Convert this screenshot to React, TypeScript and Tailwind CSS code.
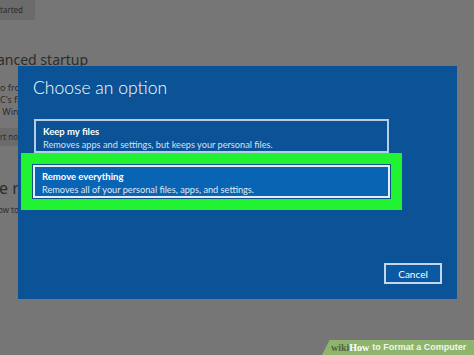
export default function App() {
  return (
    <div className="relative w-[474px] h-[355px] overflow-hidden bg-[#767676] font-['Noto_Sans',sans-serif]">
      {/* Settings page behind the dialog */}
      <div className="flex flex-col text-[#2c2c2c]">
        <div className="w-[35px] h-[20px] bg-[#6b6b6b] flex items-center text-[8px] leading-none">tarted</div>
        <div className="mt-[30px] -ml-[3px] text-[14px] leading-[20px] whitespace-nowrap">anced startup</div>
        <div className="mt-[12px] flex flex-col text-[9px] leading-[12px] whitespace-nowrap">
          <span>o from</span>
          <span>C's files</span>
          <span>&nbsp;Win</span>
        </div>
        <div className="mt-[10px] w-[30px] h-[18px] bg-[#6b6b6b] flex items-center text-[8px] leading-none whitespace-nowrap">rt now</div>
        <div className="mt-[32px] -ml-[1px] text-[16px] leading-[20px] whitespace-nowrap">e re</div>
        <div className="mt-[7px] -ml-[2px] text-[8px] leading-[10px] whitespace-nowrap">ow to</div>
      </div>

      {/* Choose an option dialog */}
      <div className="absolute left-[18px] top-[66px] w-[439px] h-[233px] bg-[#0b5396] flex flex-col pl-[16px] pr-[15px] pt-[10px] pb-[15px] text-white font-['Lato',sans-serif]">
        <h1 className="ml-[-1px] text-[17.5px] leading-[24px] font-light">Choose an option</h1>
        <div className="mt-[19px] w-[355px] h-[34px] border-2 border-[#b7cde6] px-[7px] pt-[4px]">
          <p className="text-[9.5px] leading-[13px] font-bold">Keep my files</p>
          <p className="text-[9.2px] leading-[13px] text-[#d3e1f1]">Removes apps and settings, but keeps your personal files.</p>
        </div>
        <div className="-ml-[13px] w-[381px] h-[57px] bg-[#21f232] p-[12px]">
          <div className="h-[33px] bg-[#0a64b4] border-2 border-[#e4edf8] ring-1 ring-[#0b4f8f] px-[7px] pt-[3px]">
            <p className="text-[9.5px] leading-[13px] font-bold">Remove everything</p>
            <p className="text-[9.2px] leading-[13px] text-[#dde8f5]">Removes all of your personal files, apps, and settings.</p>
          </div>
        </div>
        <button className="mt-auto self-end w-[58px] h-[21px] bg-[#0b59a3] border-2 border-[#c3d6eb] text-[10px] leading-none text-white">
          Cancel
        </button>
      </div>

      {/* wikiHow watermark */}
      <div className="absolute right-0 bottom-0 w-[152px] h-[15px] bg-[#8fb46d] [clip-path:polygon(5%_0,100%_0,100%_100%,0_100%)] flex items-center pl-[9px] text-[9px] leading-none font-bold font-['Liberation_Sans',sans-serif] whitespace-nowrap">
        <span className="text-[#52653f] font-['Liberation_Serif',serif] text-[10px]">wiki</span>
        <span className="text-white text-[10px] font-['Liberation_Serif',serif]">How</span>
        <span className="text-[#f2f6ec] ml-[3px]">to Format a Computer</span>
      </div>
    </div>
  );
}
